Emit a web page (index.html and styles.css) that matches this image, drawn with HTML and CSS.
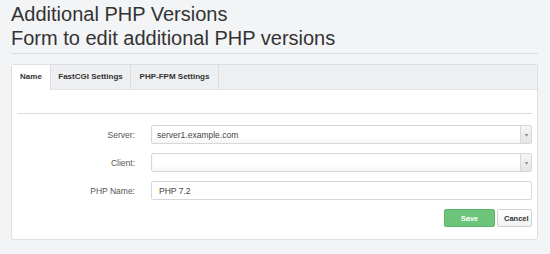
FILE: index.html
```html
<!DOCTYPE html>
<html lang="en">
<head>
    <meta charset="UTF-8">
    <title>Additional PHP Versions</title>
    <link rel="stylesheet" href="styles.css">
</head>
<body>
    <div class="page-header">
        <h1>Additional PHP Versions<br>Form to edit additional PHP versions</h1>
    </div>

    <div class="panel">
        <ul class="tabs">
            <li class="tab tab-name active">Name</li>
            <li class="tab tab-fcgi">FastCGI Settings</li>
            <li class="tab tab-fpm">PHP-FPM Settings</li>
        </ul>

        <div class="tab-body">
            <hr class="divider">

            <div class="form-row">
                <label>Server:</label>
                <div class="select">
                    <span>server1.example.com</span>
                    <span class="caret">&#9662;</span>
                </div>
            </div>
            <div class="form-row">
                <label>Client:</label>
                <div class="select">
                    <span></span>
                    <span class="caret">&#9662;</span>
                </div>
            </div>
            <div class="form-row">
                <label>PHP Name:</label>
                <input class="text-input" type="text" value="PHP 7.2">
            </div>

            <div class="actions">
                <button class="btn btn-save">Save</button>
                <button class="btn btn-cancel">Cancel</button>
            </div>
        </div>
    </div>
</body>
</html>
```

FILE: styles.css
```css
:root {
    --text-color: #333;
    --border-color: #ddd;
    --page-bg: #f3f4f6;
    --success: #6cc47a;
}

body {
    font-family: 'Liberation Sans', Arial, sans-serif;
    background-color: var(--page-bg);
    color: var(--text-color);
    margin: 0;
    padding: 0 12px 0 11px;
}

.page-header {
    border-bottom: 1px solid #dcdde0;
    padding-top: 2px;
    height: 51px;
}

.page-header h1 {
    font-size: 20px;
    font-weight: normal;
    line-height: 24px;
    margin: 0;
    color: #333;
}

.panel {
    margin-top: 10px;
    background-color: white;
    border: 1px solid #dedfe2;
    border-radius: 3px;
    height: 176px;
    box-sizing: border-box;
}

.tabs {
    display: flex;
    list-style: none;
    margin: 0;
    padding: 0;
    background-color: #eeeff1;
    border-bottom: 1px solid #e2e3e5;
    border-radius: 3px 3px 0 0;
    height: 24px;
}

.tab {
    font-size: 8px;
    font-weight: bold;
    text-align: center;
    line-height: 24px;
    border-right: 1px solid #dcdde0;
    color: #333;
}

.tab-name { width: 38px; }
.tab-fcgi { width: 79px; }
.tab-fpm { width: 87px; }

.tab.active {
    background-color: white;
    height: 25px;
}

.tab-body {
    padding: 0 5px 0 5px;
}

.divider {
    border: none;
    border-top: 1px solid #dcdde0;
    margin: 23px 0 11px;
}

.form-row {
    display: flex;
    align-items: center;
    margin-bottom: 9px;
}

.form-row label {
    width: 118px;
    text-align: right;
    font-size: 8.5px;
    color: #555;
    padding-right: 16px;
}

.select,
.text-input {
    flex: 1;
    height: 19px;
    box-sizing: border-box;
    border: 1px solid #d6d7da;
    border-radius: 2px;
    font-family: 'Liberation Sans', Arial, sans-serif;
    font-size: 8.5px;
    color: #444;
    background-color: white;
}

.select {
    display: flex;
    align-items: center;
    justify-content: space-between;
    padding-left: 5px;
    box-shadow: inset 0 -3px 4px rgba(0, 0, 0, 0.04);
}

.caret {
    width: 10px;
    height: 100%;
    border-left: 1px solid #d6d7da;
    background: linear-gradient(#f6f6f6, #e4e4e4);
    font-size: 6px;
    color: #888;
    display: flex;
    align-items: center;
    justify-content: center;
}

.text-input {
    padding: 0 0 0 7px;
    outline: none;
}

.actions {
    display: flex;
    justify-content: flex-end;
    gap: 2px;
    margin-top: 9px;
}

.btn {
    font-family: 'Liberation Sans', Arial, sans-serif;
    font-size: 7.5px;
    font-weight: bold;
    height: 18px;
    border-radius: 2px;
    cursor: pointer;
}

.btn-save {
    width: 51px;
    background-color: var(--success);
    border: 1px solid #5db46b;
    color: white;
}

.btn-cancel {
    width: 35px;
    background: linear-gradient(#fff, #f1f1f1);
    border: 1px solid #d0d0d0;
    color: #333;
}
```
